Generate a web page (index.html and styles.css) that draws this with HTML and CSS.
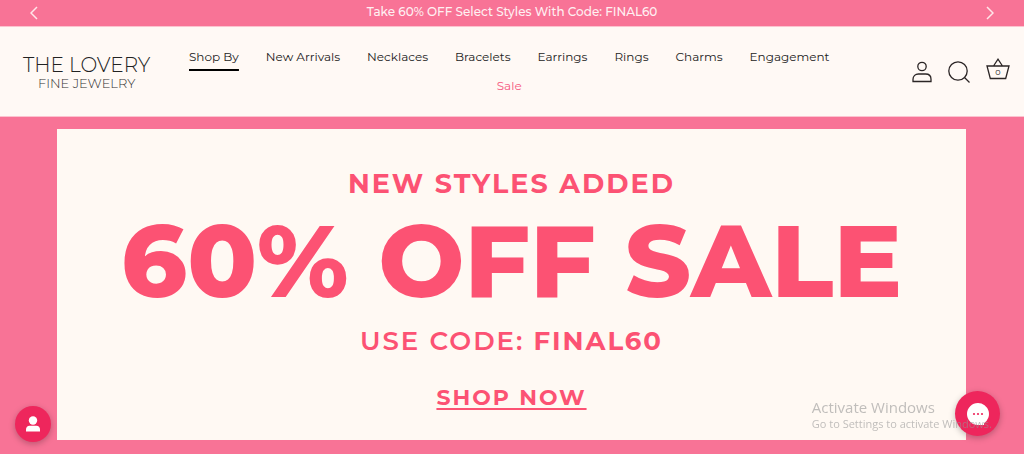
FILE: index.html
```html
<!DOCTYPE html>
<html lang="en">
  <head>
    <meta charset="UTF-8" />
    <meta name="viewport" content="width=device-width, initial-scale=1.0" />
    <title>The Lovery Fine Jewelry</title>
    <link rel="stylesheet" href="styles.css">
  </head>
  <body>
    <div class="announcement">
      <button class="arrow" aria-label="Previous">
        <svg width="8" height="14" viewBox="0 0 8 14"><path d="M7 1 1 7l6 6" /></svg>
      </button>
      <p>Take 60% OFF Select Styles With Code: FINAL60</p>
      <button class="arrow" aria-label="Next">
        <svg width="8" height="14" viewBox="0 0 8 14"><path d="m1 1 6 6-6 6" /></svg>
      </button>
    </div>

    <header class="header">
      <a href="#" class="logo">
        <span class="logo-name">THE LOVERY</span>
        <span class="logo-sub">FINE JEWELRY</span>
      </a>
      <nav class="nav">
        <a href="#" class="active">Shop By</a>
        <a href="#">New Arrivals</a>
        <a href="#">Necklaces</a>
        <a href="#">Bracelets</a>
        <a href="#">Earrings</a>
        <a href="#">Rings</a>
        <a href="#">Charms</a>
        <a href="#">Engagement</a>
        <a href="#" class="sale">Sale</a>
      </nav>
      <div class="icons">
        <a href="#" aria-label="Account">
          <svg width="20" height="22" viewBox="0 0 20 22">
            <circle cx="10" cy="5.5" r="4.2" />
            <path d="M1 20.5v-2.2c0-3.4 2.4-5.3 5.4-5.3h7.2c3 0 5.4 1.9 5.4 5.3v2.2z" />
          </svg>
        </a>
        <a href="#" aria-label="Search">
          <svg width="22" height="22" viewBox="0 0 22 22">
            <circle cx="10" cy="10" r="9.2" />
            <path d="m16.5 16.5 5 5" />
          </svg>
        </a>
        <a href="#" class="cart" aria-label="Cart">
          <svg width="24" height="22" viewBox="0 0 24 22">
            <path d="M1 8h22l-3.3 12.5H4.3zM7.5 8 12 1.2 16.5 8" />
          </svg>
          <span class="cart-count">0</span>
        </a>
      </div>
    </header>

    <main class="hero">
      <div class="banner">
        <h2>NEW STYLES ADDED</h2>
        <h1>60% OFF SALE</h1>
        <p class="code">USE CODE: <b>FINAL60</b></p>
        <a href="#" class="shop-now">SHOP NOW</a>
      </div>
    </main>

    <button class="float-btn rewards" aria-label="Rewards">
      <svg width="14" height="16" viewBox="0 0 14 16">
        <circle cx="7" cy="4.5" r="4.2" />
        <path d="M0 15.5v-2C0 11 1.5 9.7 3.5 9.7h7c2 0 3.5 1.3 3.5 3.8v2z" />
      </svg>
    </button>
    <button class="float-btn chat" aria-label="Chat">
      <svg width="22" height="22" viewBox="0 0 22 22">
        <path d="M11 0a11 11 0 0 1 6 20.2V22H11A11 11 0 0 1 11 0z" />
        <g class="dots">
          <circle cx="7" cy="11" r="1.1" />
          <circle cx="11" cy="11" r="1.1" />
          <circle cx="15" cy="11" r="1.1" />
        </g>
      </svg>
    </button>
    <div class="watermark">
      <p class="watermark-title">Activate Windows</p>
      <p>Go to Settings to activate Windows.</p>
    </div>
  </body>
</html>
```
FILE: styles.css
```css
* {
  box-sizing: border-box;
}
body {
  margin: 0;
  min-height: 100vh;
  display: flex;
  flex-direction: column;
  background-color: #f87396;
  font-family: Montserrat, Inter, sans-serif;
  color: #222;
}
h1,
h2,
p {
  margin: 0;
}
a {
  color: inherit;
  text-decoration: none;
}
button {
  border: none;
  padding: 0;
  cursor: pointer;
}
svg {
  display: block;
}
.announcement {
  display: flex;
  align-items: center;
  justify-content: space-between;
  height: 26px;
  padding: 0 30px;
  color: #fff0f2;
  font-size: 12px;
  font-weight: 500;
  line-height: 24px;
}
.announcement p {
  padding-bottom: 2px;
}
.arrow {
  background: none;
}
.arrow svg {
  fill: none;
  stroke: #ffe6ea;
  stroke-width: 1.5;
}
.header {
  display: flex;
  align-items: center;
  justify-content: space-between;
  min-height: 91px;
  padding: 0 14px 0 23px;
  background-color: #fff9f5;
  border-top: 1px solid #fcc3cf;
  border-bottom: 1px solid #fcc3cf;
}
.logo {
  display: flex;
  flex-direction: column;
  align-items: center;
  padding-top: 2px;
  font-weight: 300;
}
.logo-name {
  font-size: 20px;
  line-height: 20px;
}
.logo-sub {
  font-size: 13px;
  line-height: 16px;
  color: #333;
}
.nav {
  flex: 1;
  display: flex;
  flex-wrap: wrap;
  justify-content: center;
  column-gap: 27px;
  padding: 0 60px 2px 16px;
  font-size: 12px;
  line-height: 29px;
}
.nav .active {
  background: linear-gradient(#000, #000) bottom / 100% 2px no-repeat;
}
.nav .sale {
  color: #f5577e;
}
.icons {
  display: flex;
  align-items: center;
  gap: 16px;
}
.icons svg {
  fill: none;
  stroke: #2b2525;
  stroke-width: 1.3;
}
.cart {
  position: relative;
  padding-bottom: 6px;
}
.cart-count {
  position: absolute;
  top: 9px;
  left: 0;
  right: 0;
  text-align: center;
  font-size: 8px;
  line-height: 10px;
}
.hero {
  flex: 1;
  display: flex;
  padding: 12px 58px 14px 57px;
}
.banner {
  flex: 1;
  display: flex;
  flex-direction: column;
  align-items: center;
  padding: 37px 0 24px;
  background-color: #fff9f3;
  color: #fc5273;
  white-space: nowrap;
}
.banner h2 {
  font-size: 27px;
  line-height: 36px;
  letter-spacing: 2px;
}
.banner h1 {
  font-size: 102px;
  font-weight: 800;
  line-height: 118px;
}
.code {
  font-size: 26px;
  font-weight: 600;
  line-height: 42px;
  letter-spacing: 2px;
}
.code b {
  font-weight: 700;
}
.shop-now {
  margin-top: 22px;
  font-size: 22px;
  font-weight: 700;
  line-height: 28px;
  letter-spacing: 2px;
  text-decoration: underline;
  text-decoration-thickness: 2px;
  text-underline-offset: 3px;
}
.float-btn {
  position: fixed;
  display: flex;
  align-items: center;
  justify-content: center;
  border-radius: 50%;
  background-color: #ee265c;
  box-shadow: 0 2px 6px rgba(0, 0, 0, 0.25);
}
.float-btn svg {
  fill: #fff;
}
.float-btn .dots {
  fill: #ee265c;
}
.rewards {
  left: 15px;
  bottom: 12px;
  width: 36px;
  height: 36px;
}
.chat {
  right: 24px;
  bottom: 18px;
  width: 45px;
  height: 45px;
}
.watermark {
  position: fixed;
  right: 32px;
  bottom: 22px;
  color: rgba(150, 150, 150, 0.6);
  font-family: "Segoe UI", "Open Sans", sans-serif;
  font-size: 11px;
  line-height: 16px;
  pointer-events: none;
}
.watermark-title {
  font-size: 15px;
  line-height: 18px;
}
```
